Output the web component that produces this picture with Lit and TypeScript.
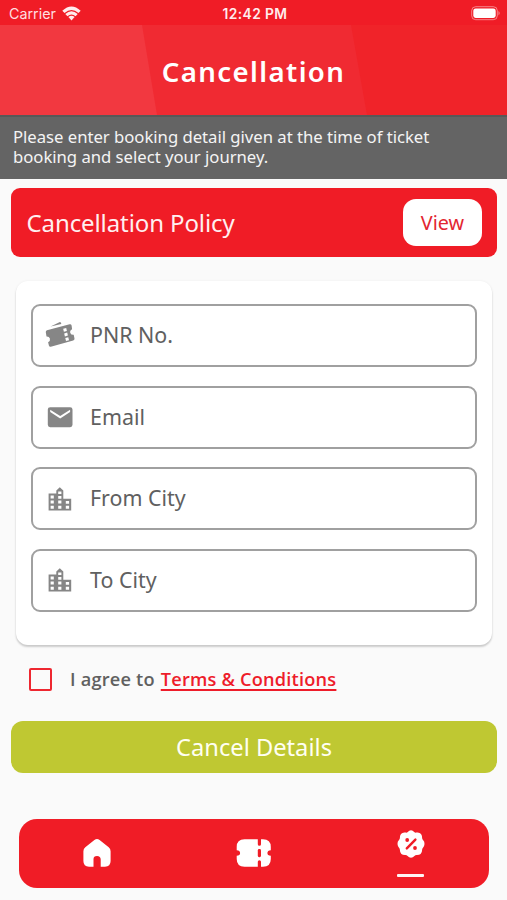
import { LitElement, html, svg, css } from "lit";
import { customElement } from "lit/decorators.js";

const ticketIcon = svg`<svg class="icon" width="30" height="28" viewBox="0 0 30 28">
  <path fill="#868686" d="M5.6 4.6 14.4 .2Q15.4-.1 15.9 .7L16.3 1.9Z"/>
  <path fill="#868686" fill-rule="evenodd" d="M2 8.3 24.6 2.3Q26.2 2 26.6 3.5L27.1 7.2Q24.6 8.5 25.3 10.9Q26.1 13 28.7 12.8L29.5 16.5Q29.7 18 28.2 18.5L5.8 24.8Q4.3 25.1 3.9 23.6L3.1 20.2Q5.6 18.8 4.9 16.4Q4.1 14.2 1.5 14.4L.8 10.3Q.6 8.8 2 8.3ZM18.2 6.7 18.9 9.7 21.9 8.9 21.2 5.9ZM19.2 11.4 19.9 14.4 22.9 13.6 22.2 10.6ZM20.3 16.1 21 19.1 24 18.3 23.3 15.3Z"/>
</svg>`;

const mailIcon = svg`<svg class="icon" width="30" height="28" viewBox="0 0 30 28">
  <path fill="#868686" fill-rule="evenodd" d="M5.2 4.2H25.1Q27.5 4.2 27.5 6.6V21.8Q27.5 24.2 25.1 24.2H5.2Q2.8 24.2 2.8 21.8V6.6Q2.8 4.2 5.2 4.2ZM5.2 6.7V9.1L15.2 15.4 25.1 9.1V6.7L15.2 13Z"/>
</svg>`;

const cityIcon = svg`<svg class="icon" width="30" height="28" viewBox="0 -1 30 28">
  <path fill="#868686" fill-rule="evenodd" d="M3.6 7.6H11.3V4.6L14.8 1.2 18.3 4.6V12.8H26.2V24.6H3.6ZM5.6 9.6V12.5H8.8V9.6ZM5.6 14.6V17.6H8.8V14.6ZM5.6 19.8V22.8H8.8V19.8ZM13.2 5.6V8H16.4V5.6ZM13.2 10V12.7H16.4V10ZM13.2 14.6V17.6H16.4V14.6ZM13.2 19.8V22.8H16.4V19.8ZM20.8 14.9V17.7H24.1V14.9ZM20.8 19.8V22.8H24.1V19.8Z"/>
</svg>`;

const fields = [
  { icon: ticketIcon, label: "PNR No." },
  { icon: mailIcon, label: "Email" },
  { icon: cityIcon, label: "From City" },
  { icon: cityIcon, label: "To City" },
];

@customElement("app-root")
export class AppRoot extends LitElement {
  static styles = css`
    :host { display: flex; flex-direction: column; width: 100%; height: 900px; box-sizing: border-box; overflow: hidden;
      background: #fafafa; font-family: "Noto Sans", "Open Sans", sans-serif; color: #606060; }
    * { box-sizing: border-box; }
    svg { display: block; flex: none; }
    span, a { white-space: nowrap; }
    .status { height: 25px; flex: none; background: #f01c26; color: #ffdfe0; display: grid; grid-template-columns: 1fr auto 1fr;
      align-items: center; padding: 2px 6px 0 9px; font: 14.3px Inter, sans-serif; }
    .carrier { display: flex; align-items: center; gap: 6px; }
    .time { font-weight: 600; font-size: 13.8px; letter-spacing: .4px; color: #ffeced; }
    .battery { justify-self: end; }
    .header { height: 90px; flex: none; display: grid; }
    .header > * { grid-area: 1 / 1; }
    .title { align-self: center; justify-self: center; color: #fff; font-weight: 600; font-size: 27.6px; letter-spacing: 1.4px; line-height: 34px; padding-top: 1px; }
    .notice { height: 64px; flex: none; background: #646464; border-top: 2px solid #585858; color: #f4f4f4;
      padding: 10px 60px 0 13px; font-size: 16.7px; line-height: 20px; letter-spacing: -.02px; }
    .policy { height: 69px; flex: none; margin: 9px 10px 0 11px; padding: 0 15px 0 15.5px; border-radius: 9px; background: #f01c26;
      display: flex; align-items: center; justify-content: space-between; color: #ffeff0; font-size: 24px; letter-spacing: -.1px; }
    .view { width: 79px; height: 47px; border: 0; border-radius: 13px; background: #fff; color: #e32631; font: 19.8px "Noto Sans", sans-serif; padding: 0; }
    .card { height: 364px; flex: none; margin: 24px 15px 0 16px; padding: 23px 15px 0; background: #fff; border-radius: 12px;
      box-shadow: 0 2px 2px rgba(0,0,0,.18), 0 0 3px rgba(0,0,0,.05); display: flex; flex-direction: column; gap: 18.5px; }
    .field { height: 63px; flex: none; border: 2px solid #a0a0a0; border-radius: 9px; display: flex; align-items: center;
      padding-left: 12px; gap: 15px; font-size: 21.4px; }
    .field span { line-height: 30px; padding-bottom: 1px; }
    .field:first-child span { padding-bottom: 2px; }
    .agree { height: 24px; flex: none; margin: 22px 0 0 29px; display: flex; align-items: center;
      font: 600 18.2px/24px "Open Sans", "Noto Sans", sans-serif; letter-spacing: .2px; }
    .box { width: 23px; height: 23px; border: 2px solid #ee2730; border-radius: 2px; margin-right: 18px; }
    .terms { color: #ee1c2a; margin-left: 6px; text-decoration: underline; text-decoration-thickness: 2px; text-underline-offset: 3px; text-decoration-skip-ink: none; }
    .submit { height: 52px; flex: none; margin: 30px 10px 0 11px; border: 0; border-radius: 12px; background: #bfc832; color: #fffff2;
      font: 23.7px "Noto Sans", sans-serif; padding: 0; }
    .nav { height: 69px; flex: none; margin: 46px 18px 0 19px; border-radius: 18px; background: #f01c26;
      display: grid; grid-template-columns: repeat(3, 1fr); justify-items: center; align-items: center; padding-bottom: 2px; }
    .tab { display: flex; flex-direction: column; align-items: center; }
    .active { gap: 16px; padding-top: 2px; }
    .line { width: 27px; height: 2.5px; background: #fff4f4; border-radius: 1px; }
  `;

  render() {
    return html`
      <div class="status">
        <div class="carrier"><span>Carrier</span>
          <svg width="19" height="15" viewBox="0 0 19 15"><g fill="#ffeced">
            <path d="M.3 4.8Q9.5-4 18.7 4.8L16.5 7.1Q9.5.8 2.5 7.1Z"/>
            <path d="M3.3 8Q9.5 2.4 15.7 8L13.6 10.2Q9.5 6.8 5.4 10.2Z"/>
            <path d="M6.4 11.1Q9.5 8.4 12.6 11.1L9.5 14.4Z"/></g></svg>
        </div>
        <span class="time">12:42 PM</span>
        <svg class="battery" width="30" height="15" viewBox="0 0 30 15">
          <rect x=".7" y=".7" width="25.6" height="13" rx="4" fill="none" stroke="#fff" stroke-opacity=".45"/>
          <rect x="2.3" y="2.5" width="22.4" height="9.4" rx="2.3" fill="#fff"/>
          <path d="M27.5 5Q29.8 7.2 27.5 9.5Z" fill="#fff" fill-opacity=".5"/>
        </svg>
      </div>
      <header class="header">
        <svg width="507" height="90" viewBox="0 0 507 90">
          <rect width="507" height="90" fill="#f02329"/>
          <path d="M0 0H351L367 90H0Z" fill="#f02a32"/>
          <path d="M0 0H142L157 90H0Z" fill="#f23840"/>
        </svg>
        <span class="title">Cancellation</span>
      </header>
      <div class="notice">Please enter booking detail given at the time of ticket booking and select your journey.</div>
      <section class="policy"><span>Cancellation Policy</span><button class="view">View</button></section>
      <section class="card">
        ${fields.map((f) => html`<div class="field">${f.icon}<span>${f.label}</span></div>`)}
      </section>
      <div class="agree"><div class="box"></div><span>I agree to</span><a class="terms">Terms &amp; Conditions</a></div>
      <button class="submit">Cancel Details</button>
      <nav class="nav">
        <div class="tab">
          <svg width="28" height="28" viewBox="0 0 28 28"><path fill="#fff" d="M11.4 1Q14-.9 16.6 1L25.7 8.2Q27.6 9.8 27.6 12.3V22Q27.6 27.7 22 27.7H17.7V20.5Q17.7 17 14 17T10.5 20.5V27.7H6Q.4 27.7.4 22V12.3Q.4 9.8 2.3 8.2Z"/></svg>
        </div>
        <div class="tab">
          <svg width="36" height="28" viewBox="0 0 36 28"><path fill="#fff" d="M8.5.3H21.8V5.2Q21.8 6.7 23.4 6.7T25 5.2V.3H27Q34.8.3 34.8 8V11.2Q31.4 11.4 31.4 14T34.8 16.8V20Q34.8 27.7 27 27.7H25V22.8Q25 21.3 23.4 21.3T21.8 22.8V27.7H8.5Q.7 27.7.7 20V16.8Q4.1 16.6 4.1 14T.7 11.2V8Q.7.3 8.5.3Z"/><rect x="21.8" y="10" width="3.2" height="8.2" rx="1.4" fill="#f01c26"/></svg>
        </div>
        <div class="tab active">
          <svg width="28" height="28" viewBox="0 0 28 28"><path fill="#fff" d="M14 .3Q15.8.3 17.2 2Q18 2.8 19.2 2.6Q22.5 2 24 4Q25.2 5.4 25.1 7.8Q25.1 9 26 10Q27.7 11.7 27.5 14Q27.4 16 26 17.7Q25.1 18.7 25.1 20Q25.1 22.6 23.6 24Q22.2 25.2 19.6 25.1Q18.3 25.1 17.4 26Q16 27.7 14 27.7T10.6 26Q9.7 25.1 8.4 25.1Q5.8 25.2 4.4 24Q2.9 22.6 2.9 20Q2.9 18.7 2 17.7Q.6 16 .5 14Q.3 11.7 2 10Q2.9 9 2.9 7.8Q2.8 5.4 4 4Q5.5 2 8.8 2.6Q10 2.8 10.8 2Q12.2.3 14 .3Z"/><path d="M9.8 18.4 18.4 9.6" stroke="#f01c26" stroke-width="2.4" stroke-linecap="round"/><circle cx="10.2" cy="10" r="1.9" fill="#f01c26"/><circle cx="18" cy="18" r="1.9" fill="#f01c26"/></svg>
          <div class="line"></div>
        </div>
      </nav>`;
  }
}
